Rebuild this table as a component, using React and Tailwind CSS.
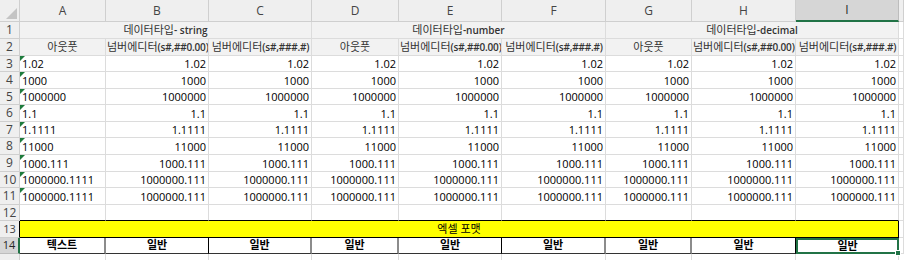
const COLS = ["A", "B", "C", "D", "E", "F", "G", "H", "I"];

const A_VALUES = ["1.02", "1000", "1000000", "1.1", "1.1111", "11000", "1000.111", "1000000.1111", "1000000.1111"];
const NUM_VALUES = ["1.02", "1000", "1000000", "1.1", "1.1111", "11000", "1000.111", "1000000.111", "1000000.111"];

const font = "font-['Open_Sans','Noto_Sans_CJK_KR',sans-serif]";
const grid = "border-r border-b border-[#dcdcdc]";
const hdr = "flex items-center justify-center border-r border-b border-[#cfcfcf] bg-[#efefef] text-[12px] text-[#444]";

// row 14 right borders, A..H (I is the selected cell)
const R14 = [
  "border-r-2 border-r-[#8c8c8c]",
  "border-r border-r-black",
  "border-r-2 border-r-[#8c8c8c]",
  "border-r-2 border-r-[#8c8c8c]",
  "border-r border-r-black",
  "border-r-2 border-r-[#8c8c8c]",
  "border-r-2 border-r-[#8c8c8c]",
  "border-r border-r-black",
];

function Title({ ko, en, span }) {
  return (
    <div className={`${span} flex items-center justify-center border-r border-b border-[#dcdcdc] bg-[#f2f2f2] text-[#333]`}>
      <span className="text-[11px]">{ko}</span>
      <span className="text-[10px] font-semibold">{en}</span>
    </div>
  );
}

function SubHead({ kind }) {
  if (kind === "out") {
    return (
      <div className={`${grid} flex items-center justify-center bg-[#f2f2f2] text-[11px] text-[#333]`}>아웃풋</div>
    );
  }
  return (
    <div
      className={`${grid} flex items-center overflow-hidden whitespace-nowrap bg-[#f2f2f2] pl-[1px] text-[#333] ${
        kind === "b" ? "justify-start" : "justify-center"
      }`}
    >
      <span className="text-[11px]">넘버에디터</span>
      <span className="text-[10px] font-semibold tracking-[-0.2px]">{kind === "b" ? "(s#,##0.00)" : "(s#,###.#)"}</span>
    </div>
  );
}

export default function App() {
  return (
    <div
      className={`${font} grid h-[260px] w-[904px] overflow-hidden bg-white grid-cols-[20px_86px_103px_103px_87px_103px_104px_86px_104px_103px_1fr] grid-rows-[22px_17px_17px_16px_17px_16px_17px_16px_17px_17px_16px_17px_16px_17px_16px_1fr]`}
    >
      {/* column headers */}
      <div className="relative border-r border-b border-[#cfcfcf] bg-[#efefef]">
        <svg className="absolute bottom-[2px] right-[2px]" width="11" height="11" viewBox="0 0 11 11">
          <polygon points="11,0 11,11 0,11" fill="#c4c4c4" />
        </svg>
      </div>
      {COLS.map((c) =>
        c === "I" ? (
          <div key={c} className="flex items-center justify-center border-r border-[#bdbdbd] border-b-2 border-b-[#217346] bg-[#d6d6d6] text-[12px] text-[#262626]">
            {c}
          </div>
        ) : (
          <div key={c} className={hdr}>
            {c}
          </div>
        )
      )}
      <div className={hdr} />

      {/* row 1 */}
      <div className={hdr + " text-[11px]"}>1</div>
      <Title ko="데이터타입" en="- string" span="col-span-3" />
      <Title ko="데이터타입" en="-number" span="col-span-3" />
      <Title ko="데이터타입" en="-decimal" span="col-span-3" />
      <div className={grid} />

      {/* row 2 */}
      <div className={hdr + " text-[11px]"}>2</div>
      {["out", "b", "c", "out", "b", "c", "out", "b", "c"].map((k, i) => (
        <SubHead key={i} kind={k} />
      ))}
      <div className={grid} />

      {/* rows 3 - 11 */}
      {A_VALUES.map((a, r) => (
        <div key={r} className="contents">
          <div className={hdr + " text-[11px]"}>{r + 3}</div>
          <div className={`${grid} relative flex items-end whitespace-nowrap pl-[2px] text-[11px] leading-[15px] text-black`}>
            <svg className="absolute left-0 top-0" width="5" height="5" viewBox="0 0 5 5">
              <polygon points="0,0 5,0 0,5" fill="#1e7b3c" />
            </svg>
            {a}
          </div>
          {COLS.slice(1).map((c) => (
            <div key={c} className={`${grid} flex items-end justify-end whitespace-nowrap pr-[2px] text-[11px] leading-[15px] text-black`}>
              {NUM_VALUES[r]}
            </div>
          ))}
          <div className={grid} />
        </div>
      ))}

      {/* row 12 */}
      <div className={hdr + " text-[11px]"}>12</div>
      {COLS.map((c) => (
        <div key={c} className="border-r border-[#dcdcdc] border-b border-b-black" />
      ))}
      <div className={grid} />

      {/* row 13 */}
      <div className="flex items-center justify-center border-r border-r-black border-b border-[#cfcfcf] bg-[#efefef] text-[11px] text-[#444]">13</div>
      <div className="col-span-9 flex items-center justify-center border-r border-b border-black bg-[#ffff00] text-[11px] text-black">
        엑셀 포맷
      </div>
      <div className={grid} />

      {/* row 14 */}
      <div className="flex items-center justify-center border-r-2 border-r-[#217346] border-b border-[#bdbdbd] bg-[#d6d6d6] text-[11px] text-[#262626]">14</div>
      {COLS.slice(0, 8).map((c, i) => (
        <div key={c} className={`${R14[i]} flex items-center justify-center border-b border-b-[#333] text-[11px] font-bold text-black`}>
          {i === 0 ? "텍스트" : "일반"}
        </div>
      ))}
      <div className="relative flex items-center justify-center border-2 border-[#217346] text-[11px] font-bold text-black">
        일반
        <div className="absolute bottom-[-4px] right-[-4px] h-[6px] w-[6px] border border-white bg-[#217346]" />
      </div>
      <div className={grid} />

      {/* partial row 15 */}
      <div className="border-r border-[#cfcfcf] bg-[#efefef]" />
      {COLS.map((c) => (
        <div key={c} className="border-r border-[#dcdcdc]" />
      ))}
      <div />
    </div>
  );
}
